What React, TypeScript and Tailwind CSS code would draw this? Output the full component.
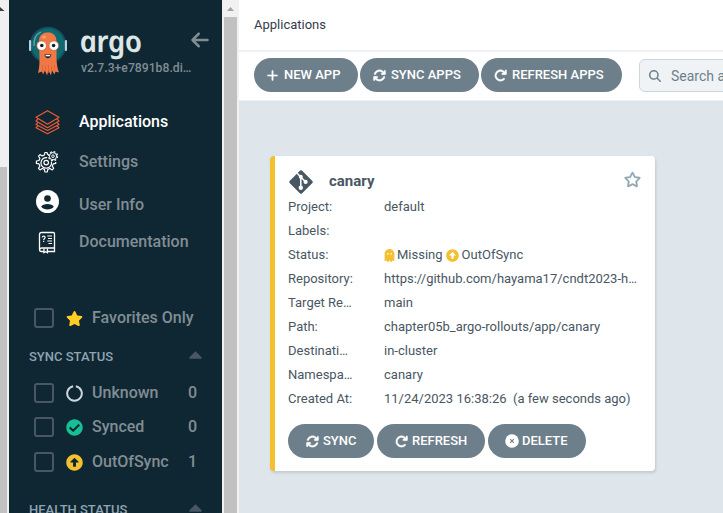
import type { ReactNode } from 'react';
import {
  FaArrowAltCircleUp,
  FaCheckCircle,
  FaGhost,
  FaRegStar,
  FaStar,
} from 'react-icons/fa';
import { FaArrowLeft, FaArrowRotateRight, FaArrowsRotate, FaMagnifyingGlass, FaPlus } from 'react-icons/fa6';

function ArgoMascot() {
  return (
    <svg width="40" height="52" viewBox="0 0 40 52" className="shrink-0">
      <circle cx="19" cy="20" r="18.3" fill="#154f5d" />
      <circle cx="19" cy="20" r="16.5" fill="#0f6a70" />
      <path d="M5 21C4.500 14 7.500 9 12 7" fill="none" stroke="#6da5a8" strokeWidth="1.3" />
      <rect x="0" y="15" width="2.200" height="11" rx="1" fill="#b5d3e5" />
      <rect x="35.800" y="15" width="2.200" height="11" rx="1" fill="#b5d3e5" />
      <path
        d="M10 17C10 10 13.500 7.500 18.800 7.500S27.500 10 27.500 17v15c0 7 1 12 2.500 15.500l-3.500-1-1 3-2.500-4-1 5-2.500-5-1.500 5-2-5-2 4-1-3-4 1.500C10.500 43 10.500 38 10.500 32Z"
        fill="#f07845"
      />
      <path d="M13.500 40v6M16.500 41v6M19.500 40v8M22.500 41v6M25.500 40v5" stroke="#d65f38" strokeWidth="0.700" />
      <ellipse cx="15" cy="12" rx="2" ry="1.600" fill="#f7a17d" />
      <circle cx="12.600" cy="20.700" r="4.800" fill="#fff" stroke="#d85935" strokeWidth="0.700" />
      <circle cx="24.800" cy="20.700" r="4.800" fill="#fff" stroke="#d85935" strokeWidth="0.700" />
      <circle cx="12.800" cy="20.500" r="1.800" fill="#14212a" />
      <circle cx="24.600" cy="20.500" r="1.800" fill="#14212a" />
      <path d="M15.500 29.500h6.800c-.3 5-6.500 5-6.800 0Z" fill="#1b2330" />
      <path d="M16.600 30h4.600v1.300h-4.600Z" fill="#fff" />
    </svg>
  );
}

function LayersIcon() {
  return (
    <svg width="25" height="26" viewBox="0 0 25 26" fill="none" stroke="#ee5b36" strokeWidth="1.150" strokeLinejoin="round">
      <path d="M12.500 1.700 24 8.300 12.500 15.200 1 8.300Z" />
      <path d="M3.200 9.700 1 12l11.500 6.700L24 12l-2.200-2.300" />
      <path d="M3.200 13.400 1 15.500l11.500 6L24 15.500l-2.200-2.100" />
      <path d="M3.200 16.900 1 18.700l11.500 6L24 18.700l-2.200-1.800" />
    </svg>
  );
}

function GearsIcon() {
  return (
    <svg width="24" height="24" viewBox="0 0 24 24" fill="none" stroke="#fff" strokeWidth="1.200" strokeLinejoin="round">
      <path d="M12.600 4.900 12 2.500H9.900L9.400 5l-2.200.9L5 4.600 3.500 6.100 4.900 8.300 4 10.500l-2.600.5v2.400l2.600.5.9 2.200-1.400 2.200L5 19.900l2.200-1.400 2.200.9.5 2.600h2.400l.5-2.600 2.200-.9 2.200 1.400 1.500-1.600-1.400-2.200.9-2.200 2.500-.5V12" />
      <path d="M12.200 7.700a5.300 5.300 0 1 0 4.200 4" />
      <circle cx="11.200" cy="12.600" r="2.300" />
      <circle cx="18" cy="6.200" r="4.500" strokeWidth="1.300" strokeDasharray="1.900 1.630" />
      <circle cx="18" cy="6.200" r="3.600" strokeWidth="1" />
      <circle cx="18" cy="6.200" r="1.300" strokeWidth="1" />
    </svg>
  );
}

function UserIcon() {
  return (
    <svg width="23" height="23" viewBox="0 0 23 23">
      <circle cx="11.500" cy="11.500" r="11.500" fill="#fff" />
      <circle cx="11.500" cy="8.500" r="3.300" fill="#0f2733" />
      <path d="M5.200 16.800c1.500-3.600 11-3.600 12.600 0-2.800 3.600-9.800 3.600-12.600 0Z" fill="#0f2733" />
    </svg>
  );
}

function BookIcon() {
  return (
    <svg width="18" height="23" viewBox="0 0 18 23" fill="none" stroke="#fff" strokeWidth="1.300">
      <path d="M6 20.500H3.500C2 20.500 1.500 20 1.500 18.500v-15C1.500 2 2.300 1.500 3.500 1.500h11.800c.8 0 1.200.4 1.200 1.200v17.800H9.500M1.800 18.200c.3-.8 1-1.200 1.900-1.200h12.800" />
      <path d="M6 17.500v4.200l1.700-1 1.700 1v-4.200" />
      <path d="M4.300 6.500c0-2 2.800-1.800 2.800 0 0 1.200-1.400 1.100-1.400 2.400M5.700 9.800V11M9.300 5h4.700M10 7.500h4M9.300 10h4.700M10.500 12.500H14" strokeWidth="1.200" />
    </svg>
  );
}

function UnknownIcon() {
  return (
    <svg width="17" height="17" viewBox="0 0 17 17" fill="none" stroke="#ccd6dd" strokeWidth="2">
      <path d="M9.900 1.300a7.300 7.300 0 1 1-2.800 0" />
    </svg>
  );
}

function GitIcon() {
  return (
    <svg width="26" height="26" viewBox="0 0 26 26">
      <rect x="4.300" y="4.300" width="17.400" height="17.400" rx="1.300" transform="rotate(45 13 13)" fill="#495763" />
      <path d="m9.200 4.200 3.600 3.800v10M13 8.200l4.200 4.300" stroke="#fff" strokeWidth="1.500" fill="none" />
      <circle cx="12.800" cy="7.800" r="2" fill="#fff" />
      <circle cx="12.800" cy="18.700" r="2.200" fill="#fff" />
      <circle cx="17.600" cy="12.900" r="2.100" fill="#fff" />
    </svg>
  );
}

function DeleteIcon() {
  return (
    <svg width="14" height="14" viewBox="0 0 14 14">
      <circle cx="7" cy="7" r="6.800" fill="#fff" />
      <path d="m5.200 5.200 3.600 3.600m0-3.600L5.200 8.800" stroke="#6d7f8b" strokeWidth="1.100" />
    </svg>
  );
}

function NavItem({ icon, label, className }: { icon: ReactNode; label: string; className: string }) {
  return (
    <div className={`flex items-start ${className}`}>
      <span className="flex h-[26px] w-[26px] shrink-0 items-center justify-center">{icon}</span>
      <span className="ml-[19px] pt-px leading-6">{label}</span>
    </div>
  );
}

function FilterRow({ icon, label, count, className }: { icon: ReactNode; label: string; count?: string; className: string }) {
  return (
    <div className={`flex h-5 items-center pl-[25px] pr-[25px] ${className}`}>
      <span className="size-5 shrink-0 rounded-[3px] border-2 border-[#495763]" />
      <span className="ml-3 flex w-[17px] justify-center">{icon}</span>
      <span className="ml-[9px] whitespace-nowrap">{label}</span>
      {count && <span className="ml-auto">{count}</span>}
    </div>
  );
}

function SectionTitle({ title, className }: { title: string; className: string }) {
  return (
    <div className={`flex h-4 items-center justify-between pl-5 pr-5 text-[13px] text-[#8fa4b1] ${className}`}>
      <span className="pt-0.5">{title}</span>
      <svg width="13" height="8" viewBox="0 0 13 8" className="mb-[3px]">
        <path d="M6.500.3 12.600 6.200q.4 1.500-.8 1.500H1.200Q0 7.700.4 6.200Z" fill="#495763" />
      </svg>
    </div>
  );
}

function Sidebar() {
  return (
    <aside className="h-full w-[213px] shrink-0 overflow-hidden bg-[#0f2733] font-medium text-[#818d94]">
      <div className="flex h-[109px] pl-5 pt-[25px]">
        <ArgoMascot />
        <div className="ml-3 w-[109px]">
          <div className="h-[35px] w-[64px] origin-[0_26px] skew-x-12 whitespace-nowrap font-['Noto_Sans',sans-serif] text-[30px] font-semibold italic leading-[32px] tracking-[-0.7px] text-[#dee6e5]">
            argo
          </div>
          <div className="w-[111px] truncate text-[12.200px] leading-4">v2.7.3+e7891b8.dirty</div>
        </div>
        <FaArrowLeft className="mt-[5px] size-[20px] text-[#818d94]" />
      </div>
      <nav className="flex h-[199px] flex-col pl-[25px]">
        <NavItem className="h-10 text-white" icon={<LayersIcon />} label="Applications" />
        <NavItem className="h-[43px]" icon={<GearsIcon />} label="Settings" />
        <NavItem className="h-[37px] [&>span:first-child]:-mt-1" icon={<UserIcon />} label="User Info" />
        <NavItem className="h-10" icon={<BookIcon />} label="Documentation" />
      </nav>
      <FilterRow className="" icon={<FaStar className="size-[17px] shrink-0 text-[#ffce25]" />} label="Favorites Only" />
      <SectionTitle className="mt-5" title="SYNC STATUS" />
      <FilterRow className="mt-[19px]" icon={<UnknownIcon />} label="Unknown" count="0" />
      <FilterRow className="mt-[14px]" icon={<FaCheckCircle className="size-[17px] text-[#18be94]" />} label="Synced" count="0" />
      <FilterRow className="mt-[15px]" icon={<FaArrowAltCircleUp className="size-[17px] text-[#f4c030]" />} label="OutOfSync" count="1" />
      <SectionTitle className="mt-[29px]" title="HEALTH STATUS" />
    </aside>
  );
}

function PillButton({ icon, label, className }: { icon: ReactNode; label: string; className: string }) {
  return (
    <button className={`flex h-[34px] shrink-0 items-center rounded-full bg-[#6d7f8b] text-[13px] font-medium whitespace-nowrap text-white ${className}`}>
      {icon}
      <span>{label}</span>
    </button>
  );
}

const details: { label: string; value: ReactNode }[] = [
  { label: 'Project:', value: 'default' },
  { label: 'Labels:', value: '' },
  {
    label: 'Status:',
    value: (
      <span className="flex items-center">
        <FaGhost className="mr-[2px] h-[13px] w-[11px] text-[#f4c030]" />
        Missing
        <FaArrowAltCircleUp className="mx-[3px] size-[13px] text-[#f4c030]" />
        OutOfSync
      </span>
    ),
  },
  { label: 'Repository:', value: 'https://github.com/hayama17/cndt2023-handson' },
  { label: 'Target Revision:', value: 'main' },
  { label: 'Path:', value: 'chapter05b_argo-rollouts/app/canary' },
  { label: 'Destination:', value: 'in-cluster' },
  { label: 'Namespace:', value: 'canary' },
  { label: 'Created At:', value: <>11/24/2023 16:38:26&nbsp; (a few seconds ago)</> },
];

function ApplicationCard() {
  return (
    <article className="h-[315px] w-[385px] rounded-[4px] border-l-5 border-[#f4c030] bg-white pl-[13px] pt-3 shadow-[1px_2px_3px_rgba(0,0,0,0.12)]">
      <div className="flex h-[27px] items-center pr-[14px]">
        <GitIcon />
        <span className="ml-[15px] text-[15px] font-bold text-[#495763]">canary</span>
        <FaRegStar className="ml-auto mb-1 size-[17px] stroke-[#8fa4b1] stroke-[12px] text-[#8fa4b1]" />
      </div>
      <dl className="text-[13px] leading-6 text-[#495763]">
        {details.map((row) => (
          <div key={row.label} className="flex h-6">
            <dt className="mr-[30px] w-[66px] shrink-0 truncate">{row.label}</dt>
            <dd className="w-[254px] truncate">{row.value}</dd>
          </div>
        ))}
      </dl>
      <div className="mt-[13px] flex gap-[3px]">
        <PillButton className="w-[86px] gap-1 pl-[18px]" icon={<FaArrowsRotate className="size-[13px] stroke-white stroke-[14px]" />} label="SYNC" />
        <PillButton className="w-[108px] gap-1 pl-[18px]" icon={<FaArrowRotateRight className="size-[13px] stroke-white stroke-[14px]" />} label="REFRESH" />
        <PillButton className="w-[98px] gap-[3px] pl-[17px]" icon={<DeleteIcon />} label="DELETE" />
      </div>
    </article>
  );
}

export default function App() {
  return (
    <div className="flex h-[513px] w-[723px] overflow-hidden bg-white font-['Roboto',sans-serif] text-base">
      <div className="flex h-full w-[9px] shrink-0 flex-col bg-[#f0f0f0]">
        <svg width="5" height="167" viewBox="0 0 5 167" className="shrink-0">
          <path d="M0 7 4.500 11H0Z" fill="#404040" />
        </svg>
        <div className="w-[7px] grow bg-[#c1c1c1]" />
      </div>
      <Sidebar />
      <div className="flex h-full w-[17px] shrink-0 flex-col items-center bg-[#f1f1f1]">
        <svg width="13" height="17" viewBox="0 0 13 17" className="shrink-0">
          <path d="M3 11 6.500 7 10 11Z" fill="#a3a3a3" />
        </svg>
        <div className="w-[13px] grow bg-[#c1c1c1]" />
      </div>
      <main className="flex h-full min-w-0 grow flex-col bg-[#dee6eb]">
        <header className="flex h-[52px] shrink-0 items-center border-b-2 border-[#edf1f5] bg-white pl-[15px] text-[13px] text-[#363c4a]">
          Applications
        </header>
        <div className="flex h-[49px] shrink-0 items-start gap-[2px] border-b border-[#edf1f5] bg-white pl-[15px] pt-[6px]">
          <PillButton className="w-[104px] gap-[5px] pl-3" icon={<FaPlus className="size-[13px] stroke-white stroke-[6px]" />} label="NEW APP" />
          <PillButton className="w-[119px] gap-[5px] pl-[13px]" icon={<FaArrowsRotate className="size-[13px] stroke-white stroke-[14px]" />} label="SYNC APPS" />
          <PillButton className="w-[141px] gap-[5px] pl-[13px]" icon={<FaArrowRotateRight className="size-[13px] stroke-white stroke-[14px]" />} label="REFRESH APPS" />
          <div className="ml-[15px] mt-px flex h-[33px] w-[300px] shrink-0 items-center rounded-[6px] border border-[#ccd6dd] bg-[#eff3f5] pl-[9px] text-sm text-[#6d7f8b]">
            <FaMagnifyingGlass className="mr-[10px] size-[12px]" />
            <span className="whitespace-nowrap">Search applications...</span>
          </div>
        </div>
        <section className="pl-[31px] pt-[55px]">
          <ApplicationCard />
        </section>
      </main>
    </div>
  );
}
